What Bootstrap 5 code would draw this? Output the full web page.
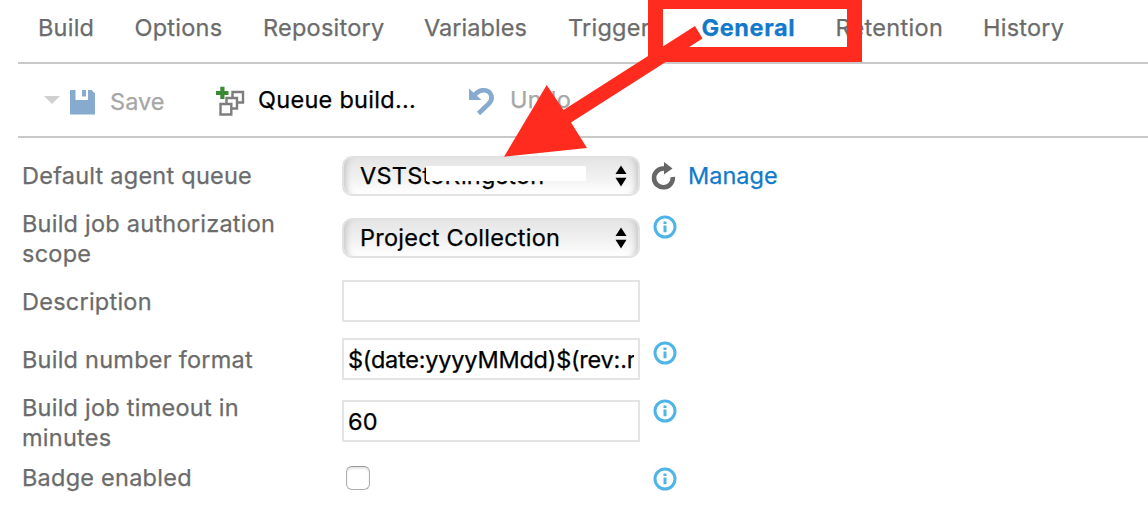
<!DOCTYPE html>
<html lang="en">
<head>
<meta charset="utf-8">
<meta name="viewport" content="width=device-width, initial-scale=1">
<title>Build definition - General</title>
<link rel="stylesheet" href="https://cdn.jsdelivr.net/npm/bootstrap@5.3.0/dist/css/bootstrap.min.css">
<style>
  body { font-family: Inter, "Liberation Sans", sans-serif; font-size: 23.5px; line-height: 30px; letter-spacing: .24px; color: #6b6b6b; background: #fff; overflow: hidden; -webkit-text-stroke: .25px; }
  .pane { margin-left: 18px; }
  .tab-strip { height: 64px; border-bottom: 2px solid #c8c8c8; padding: 13px 0 0 20px; }
  .tab-strip .nav-link { padding: 0; color: #6b6b6b; white-space: nowrap; }
  .tab-strip .nav-link.active { color: #127acb; font-weight: 700; letter-spacing: .6px; }
  .w-build { width: 96.5px; } .w-options { width: 128.5px; } .w-repository { width: 161px; }
  .w-variables { width: 144px; letter-spacing: .05px; } .w-triggers { width: 133.5px; } .w-general { width: 134px; }
  .w-retention { width: 147.5px; letter-spacing: .3px; }
  .tool-strip { height: 74px; border-bottom: 2px solid #c8c8c8; color: #000; }
  .tool-strip .tool-off { color: #a6a6a6; }
  .caret { width: 16px; height: 8px; margin: 0 10px 0 26px; background: #d0d0d0; clip-path: polygon(0 0, 100% 0, 50% 100%); }
  .ico-save { margin-top: 4px; } .ico-queue { margin: 2px 0 0 -1px; } .ico-undo { margin-top: 2px; }
  .lbl-save { width: 106px; margin-left: 14px; padding-top: 3px; letter-spacing: .05px; }
  .lbl-queue { width: 210px; margin-left: 13px; letter-spacing: .28px; }
  .lbl-undo { margin-left: 15px; letter-spacing: .3px; }
  .settings { display: grid; grid-template-columns: 324px 298px 1fr; grid-template-rows: 60px 64px 64px 52px 70px 44px; padding-top: 8px; align-items: center; }
  .settings label { padding-left: 4px; }
  .settings .lbl-scope { padding-top: 2px; }
  .settings .form-control { height: 42px; color: #000; font-size: inherit; line-height: 30px; letter-spacing: inherit; border: 2px solid #e4e4e4; border-radius: 0; padding: 4px; background: #fff; }
  .settings .form-control.tight { letter-spacing: -.22px; }
  .settings .raised { margin-top: -2px; }
  .pop { position: relative; height: 40px; border: 2px solid #e2e2e2; border-radius: 10px; color: #000; padding: 3px 0 0 16px; background: linear-gradient(#e5e5e5, #f1f1f1 55%, #fff); box-shadow: inset 8px 0 6px -6px #c4c4c4, inset -8px 0 6px -6px #c4c4c4; }
  .pop .arrows { position: absolute; right: 11px; top: 7px; }
  .patch { position: absolute; left: 82px; top: 8px; width: 160px; height: 15px; background: #fff; }
  .settings .form-check-input { width: 24px; height: 24px; margin: 0 0 0 4px; border: 1.5px solid #adadad; border-top-color: #969696; border-radius: 6px; box-shadow: inset 0 2px 2px #e6e6e6; }
  .info { width: 24px; height: 24px; margin-left: 13px; }
  .info-scope { margin-bottom: 22px; } .info-format { margin-bottom: 14px; } .info-timeout { margin-bottom: 20px; } .info-badge { margin-top: 2px; }
  .ico-refresh { margin-left: 11px; }
  .manage { color: #127acb; text-decoration: none; letter-spacing: 0; margin-left: 11px; }
  .annotation { position: absolute; left: 0; top: 0; pointer-events: none; }
</style>
</head>
<body>
<svg class="d-none">
  <symbol id="i-info" viewBox="0 0 24 24"><circle cx="12" cy="12" r="10" fill="#fff" stroke="#4fb4e6" stroke-width="3"/><path d="M10.500 10.500h3v6.700h-3zM10.500 6.500h3v2.400h-3z" fill="#4fb4e6"/></symbol>
  <symbol id="i-arrows" viewBox="0 0 12 22"><path d="M6 .5 11.500 9H.5zM.5 12.800h11L6 21.500z" fill="#000"/></symbol>
</svg>
<main class="pane">
  <nav class="nav flex-nowrap tab-strip">
    <a class="nav-link w-build">Build</a>
    <a class="nav-link w-options">Options</a>
    <a class="nav-link w-repository">Repository</a>
    <a class="nav-link w-variables">Variables</a>
    <a class="nav-link w-triggers">Triggers</a>
    <a class="nav-link active w-general">General</a>
    <a class="nav-link w-retention">Retention</a>
    <a class="nav-link">History</a>
  </nav>

  <div class="tool-strip d-flex align-items-center">
    <span class="caret"></span>
    <svg class="ico-save" width="26" height="26" viewBox="0 0 26 26"><path d="M0 1h5.500v10H18V1h3.500L25 4.500V25.500H0z" fill="#86abce"/><path d="M12 1h4v6.500h-4z" fill="#86abce"/></svg>
    <span class="lbl-save tool-off">Save</span>
    <svg class="ico-queue" width="30" height="30" viewBox="0 0 30 30"><g fill="#fff" stroke="#7d7d7d" stroke-width="2.400"><path d="M17.500 6H28v10.500H17.500z"/><path d="M11.500 12H22V22.500H11.500z"/><path d="M5.500 18h10.800V28.500H5.500z"/></g><path d="M5.300 .8h4.200V5h4v4h-4v4H5.300V9H1V5h4.300z" fill="#388a34"/></svg>
    <span class="lbl-queue">Queue build...</span>
    <svg class="ico-undo" width="27" height="30" viewBox="0 0 27 30"><path d="M6 10C10 3.500 18.500 2.500 22 7c3 4.500 1.500 8-1.500 11L10.500 27.500" fill="none" stroke="#86abce" stroke-width="4.600"/><path d="M1 2.500V14h12.500z" fill="#86abce"/></svg>
    <span class="lbl-undo tool-off">Undo</span>
  </div>

  <form class="settings">
    <label>Default agent queue</label>
    <div class="pop">VSTStoKingston<span class="patch"></span><svg class="arrows" width="12" height="22"><use href="#i-arrows"/></svg></div>
    <div class="d-flex align-items-center">
      <svg class="ico-refresh" width="26" height="30" viewBox="0 0 26 30"><path d="M14.500 7.500H12A9.400 9.400 0 1 0 21.800 16" fill="none" stroke="#666" stroke-width="4.600"/><path d="M13 1l8.500 6.500-8.500 6z" fill="#666"/></svg>
      <a class="manage">Manage</a>
    </div>

    <label class="lbl-scope">Build job authorization<br>scope</label>
    <div class="pop">Project Collection<svg class="arrows" width="12" height="22"><use href="#i-arrows"/></svg></div>
    <svg class="info info-scope"><use href="#i-info"/></svg>

    <label>Description</label>
    <input class="form-control raised" type="text">
    <span></span>

    <label>Build number format</label>
    <input class="form-control tight raised" type="text" value="$(date:yyyyMMdd)$(rev:.r)">
    <svg class="info info-format"><use href="#i-info"/></svg>

    <label class="pt-1">Build job timeout in<br>minutes</label>
    <input class="form-control" type="text" value="60">
    <svg class="info info-timeout"><use href="#i-info"/></svg>

    <label>Badge enabled</label>
    <input class="form-check-input" type="checkbox">
    <svg class="info info-badge"><use href="#i-info"/></svg>
  </form>
</main>

<svg class="annotation" width="1148" height="528" viewBox="0 0 1148 528">
  <path fill="#fe2b1e" fill-rule="evenodd" d="M648 0h214v62H648zM663 9v38h184V9z"/>
  <path fill="#fe2b1e" d="M695 26l7.500 12.500L571 122.500l16 25.500-83 8.700L546.700 85 563.500 110z"/>
</svg>
<script src="https://cdn.jsdelivr.net/npm/bootstrap@5.3.0/dist/js/bootstrap.bundle.min.js"></script>
</body>
</html>
